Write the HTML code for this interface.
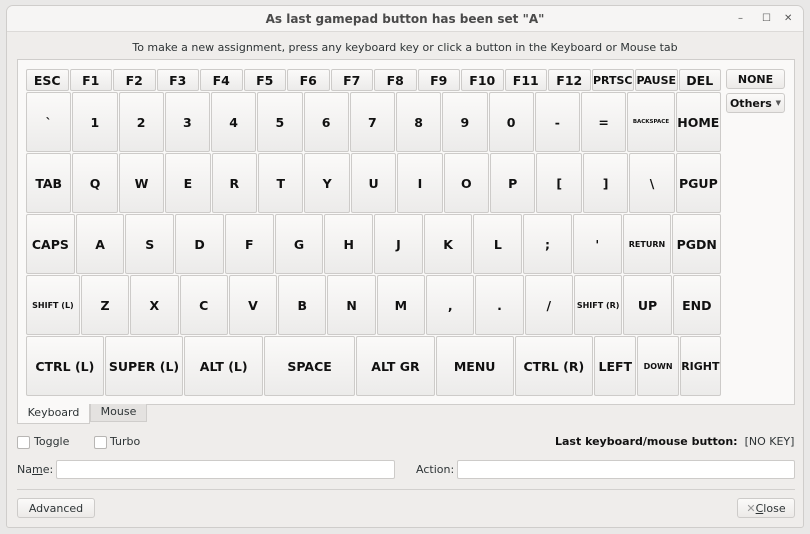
<!DOCTYPE html>
<html><head><meta charset="utf-8"><style>
*{box-sizing:border-box;margin:0;padding:0}
body{width:810px;height:534px;background:#e9e8e7;font-family:"DejaVu Sans","Liberation Sans",sans-serif;font-size:11px;color:#2e3436;position:relative;overflow:hidden}
.win{position:absolute;left:6px;top:5px;width:798px;height:523px;background:#efedeb;border:1px solid #cfcdcb;border-radius:7px 7px 3px 3px;overflow:hidden}
.title{height:26px;background:#f6f5f4;border-bottom:1px solid #dcdad8;text-align:center;font-weight:bold;font-size:12px;line-height:26px;color:#4a4a4a}
.ctl{position:absolute;top:7px;font-size:10px;color:#555}
.info{position:absolute;top:35px;left:0;width:100%;text-align:center;font-size:11px;color:#2e3436}
.panel{position:absolute;left:10px;top:53px;width:778px;height:346px;background:#faf9f8;border:1px solid #cfcdcb}
.kb{position:absolute;left:19px;top:63px;width:695px}
.row{display:flex;width:695px}
.k{flex:1 1 0;margin-right:1px;margin-bottom:1px;border:1px solid #cdcbc9;border-radius:2px;background:linear-gradient(#fbfaf9,#ecebea);display:flex;align-items:center;justify-content:center;font-weight:bold;font-size:12.5px;color:#111;white-space:nowrap;overflow:hidden;min-width:0}
.k:last-child{margin-right:0}
.r0 .k{height:22px}
.r1 .k,.r2 .k,.r3 .k,.r4 .k,.r5 .k{height:60px}
.s{font-size:8px}
.xs{font-size:5.5px}
.btn{position:absolute;border:1px solid #cdcbc9;border-radius:3px;background:linear-gradient(#fbfaf9,#eceae8);display:flex;align-items:center;justify-content:center;font-size:11px;color:#2e3436}
.cb{position:absolute;width:13px;height:13px;border:1px solid #b8b6b4;background:#fff;border-radius:2px}
.inp{position:absolute;height:19px;background:#fff;border:1px solid #cdcbc9;border-radius:2px}
.t{position:absolute;white-space:nowrap}
</style></head><body>
<div class="win">
<div class="title">As last gamepad button has been set "A"</div>
<div class="ctl" style="left:731px">–</div><div class="ctl" style="left:755px">☐</div><div class="ctl" style="left:777px">✕</div>
<div class="info">To make a new assignment, press any keyboard key or click a button in the Keyboard or Mouse tab</div>
<div class="panel"></div>
<div class="kb">
<div class="row r0"><div class="k">ESC</div><div class="k">F1</div><div class="k">F2</div><div class="k">F3</div><div class="k">F4</div><div class="k">F5</div><div class="k">F6</div><div class="k">F7</div><div class="k">F8</div><div class="k">F9</div><div class="k">F10</div><div class="k">F11</div><div class="k">F12</div><div class="k" style="font-size:11px">PRTSC</div><div class="k" style="font-size:11px">PAUSE</div><div class="k">DEL</div></div>
<div class="row r1"><div class="k">`</div><div class="k">1</div><div class="k">2</div><div class="k">3</div><div class="k">4</div><div class="k">5</div><div class="k">6</div><div class="k">7</div><div class="k">8</div><div class="k">9</div><div class="k">0</div><div class="k">-</div><div class="k">=</div><div class="k xs" style="flex-grow:1.05">BACKSPACE</div><div class="k">HOME</div></div>
<div class="row r2"><div class="k">TAB</div><div class="k">Q</div><div class="k">W</div><div class="k">E</div><div class="k">R</div><div class="k">T</div><div class="k">Y</div><div class="k">U</div><div class="k">I</div><div class="k">O</div><div class="k">P</div><div class="k">[</div><div class="k">]</div><div class="k">\</div><div class="k">PGUP</div></div>
<div class="row r3"><div class="k">CAPS</div><div class="k">A</div><div class="k">S</div><div class="k">D</div><div class="k">F</div><div class="k">G</div><div class="k">H</div><div class="k">J</div><div class="k">K</div><div class="k">L</div><div class="k">;</div><div class="k">'</div><div class="k s">RETURN</div><div class="k">PGDN</div></div>
<div class="row r4"><div class="k s" style="flex-grow:1.12">SHIFT (L)</div><div class="k">Z</div><div class="k">X</div><div class="k">C</div><div class="k">V</div><div class="k">B</div><div class="k">N</div><div class="k">M</div><div class="k">,</div><div class="k">.</div><div class="k">/</div><div class="k s">SHIFT (R)</div><div class="k">UP</div><div class="k">END</div></div>
<div class="row r5"><div class="k" style="flex-grow:79">CTRL (L)</div><div class="k" style="flex-grow:80">SUPER (L)</div><div class="k" style="flex-grow:80">ALT (L)</div><div class="k" style="flex-grow:93">SPACE</div><div class="k" style="flex-grow:80">ALT GR</div><div class="k" style="flex-grow:79">MENU</div><div class="k" style="flex-grow:80">CTRL (R)</div><div class="k" style="flex-grow:42">LEFT</div><div class="k s" style="flex-grow:41">DOWN</div><div class="k" style="flex-grow:41;font-size:11px">RIGHT</div></div>
</div>
<div class="btn" style="left:719px;top:63px;width:59px;height:20px;font-weight:bold;color:#111">NONE</div>
<div class="btn" style="left:719px;top:87px;width:59px;height:20px;font-weight:bold;color:#111">Others&nbsp;<span style="font-size:7px;color:#555">▼</span></div>
<div class="t" style="left:10px;top:398px;width:73px;height:20px;background:#faf9f8;border:1px solid #cfcdcb;border-top:none;text-align:center;line-height:18px">Keyboard</div>
<div class="t" style="left:83px;top:398px;width:57px;height:18px;background:#e4e2e0;border:1px solid #cfcdcb;border-top:none;text-align:center;line-height:16px">Mouse</div>
<div class="cb" style="left:10px;top:430px"></div><div class="t" style="left:27px;top:429px">Toggle</div>
<div class="cb" style="left:87px;top:430px"></div><div class="t" style="left:103px;top:429px">Turbo</div>
<div class="t" style="left:548px;top:429px"><b style="color:#111">Last keyboard/mouse button:</b>&nbsp; [NO KEY]</div>
<div class="t" style="left:10px;top:457px">Na<u>m</u>e:</div>
<div class="inp" style="left:49px;top:454px;width:339px"></div>
<div class="t" style="left:409px;top:457px">Action:</div>
<div class="inp" style="left:450px;top:454px;width:338px"></div>
<div class="t" style="left:10px;top:483px;width:778px;height:1px;background:#d2d0ce"></div>
<div class="btn" style="left:10px;top:492px;width:78px;height:20px">Advanced</div>
<div class="btn" style="left:730px;top:492px;width:58px;height:20px"><span style="color:#999;font-weight:bold">✕</span><u>C</u>lose</div>
</div>
</body></html>
